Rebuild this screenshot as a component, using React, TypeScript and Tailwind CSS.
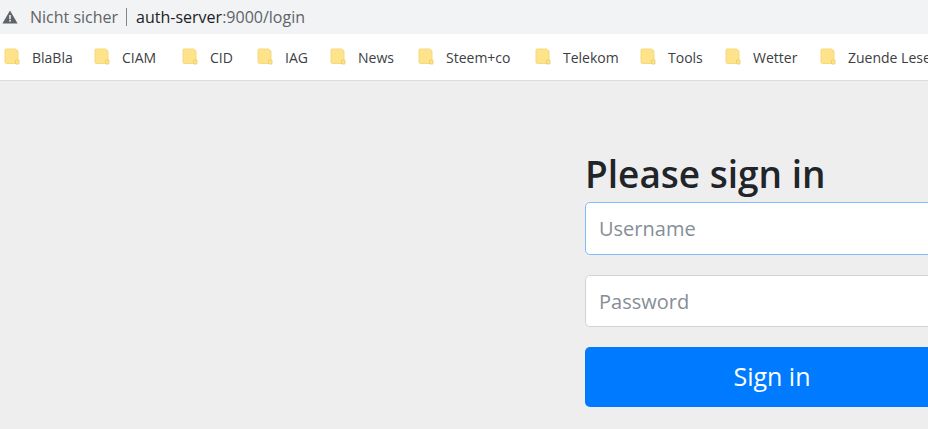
const bookmarks = [
  { name: 'BlaBla', width: 'w-[90px]' },
  { name: 'CIAM', width: 'w-[88px]' },
  { name: 'CID', width: 'w-[75px]' },
  { name: 'IAG', width: 'w-[73px]' },
  { name: 'News', width: 'w-[88px]' },
  { name: 'Steem+co', width: 'w-[117px]' },
  { name: 'Telekom', width: 'w-[105px]' },
  { name: 'Tools', width: 'w-[85px]' },
  { name: 'Wetter', width: 'w-[95px]' },
  { name: 'Zuende Lesen', width: 'w-[120px]' },
];

function FolderIcon() {
  return (
    <svg width="16" height="18" viewBox="0 0 16 18" className="shrink-0">
      <path d="M2 1h9.5L14 3v12.5H2.5a1.5 1.5 0 0 1-1.5-1.5V2a1 1 0 0 1 1-1z" fill="#fee38a" stroke="#f5d97f" strokeWidth="1" />
      <rect x="11.5" y="12" width="3.5" height="4" rx="0.5" fill="#fee38a" stroke="#e9c964" strokeWidth="0.8" />
    </svg>
  );
}

function WarningIcon() {
  return (
    <svg width="16" height="14" viewBox="0 0 16 14" className="shrink-0">
      <path d="M8 0.5 15.6 13.5H0.4z" fill="#5f6368" />
      <rect x="7.2" y="5" width="1.6" height="4.2" fill="#f1f3f4" />
      <rect x="7.2" y="10" width="1.6" height="1.6" fill="#f1f3f4" />
    </svg>
  );
}

export default function App() {
  return (
    <div className="w-[928px] h-[429px] overflow-hidden flex flex-col bg-[#eeeeee] font-['Open_Sans','Noto_Sans',sans-serif]">
      <div className="h-[34px] shrink-0 bg-[#f1f3f4] flex items-center pl-[2px] text-[16px]">
        <WarningIcon />
        <span className="ml-[12px] text-[#5f6368]">Nicht sicher</span>
        <span className="ml-[8px] mr-[9px] w-[1px] h-[18px] bg-[#80868b]"></span>
        <span className="text-[#202124]">auth-server</span>
        <span className="text-[#5f6368]">:9000/login</span>
      </div>

      <div className="h-[47px] shrink-0 bg-white border-b border-[#dadce0] flex items-center pl-[4px] text-[14px] text-[#3c4043] whitespace-nowrap overflow-hidden">
        {bookmarks.map((b) => (
          <div key={b.name} className={`${b.width} shrink-0 flex items-center gap-[12px]`}>
            <FolderIcon />
            <span>{b.name}</span>
          </div>
        ))}
      </div>

      <div className="flex-1 pl-[585px] pt-[68px]">
        <form className="w-[374px] flex flex-col">
          <h1 className="text-[37px] leading-[50px] font-semibold text-[#212529] mb-[3px]">Please sign in</h1>
          <input
            placeholder="Username"
            className="h-[53px] rounded-[5px] border border-[#80bdff] bg-white px-[13px] text-[20px] placeholder:text-[#868e96] outline-none mb-[20px]"
          />
          <input
            placeholder="Password"
            className="h-[52px] rounded-[5px] border border-[#ced4da] bg-white px-[13px] text-[20px] placeholder:text-[#868e96] outline-none mb-[20px]"
          />
          <button type="button" className="h-[60px] rounded-[5px] bg-[#007bff] text-white text-[25px]">
            Sign in
          </button>
        </form>
      </div>
    </div>
  );
}
